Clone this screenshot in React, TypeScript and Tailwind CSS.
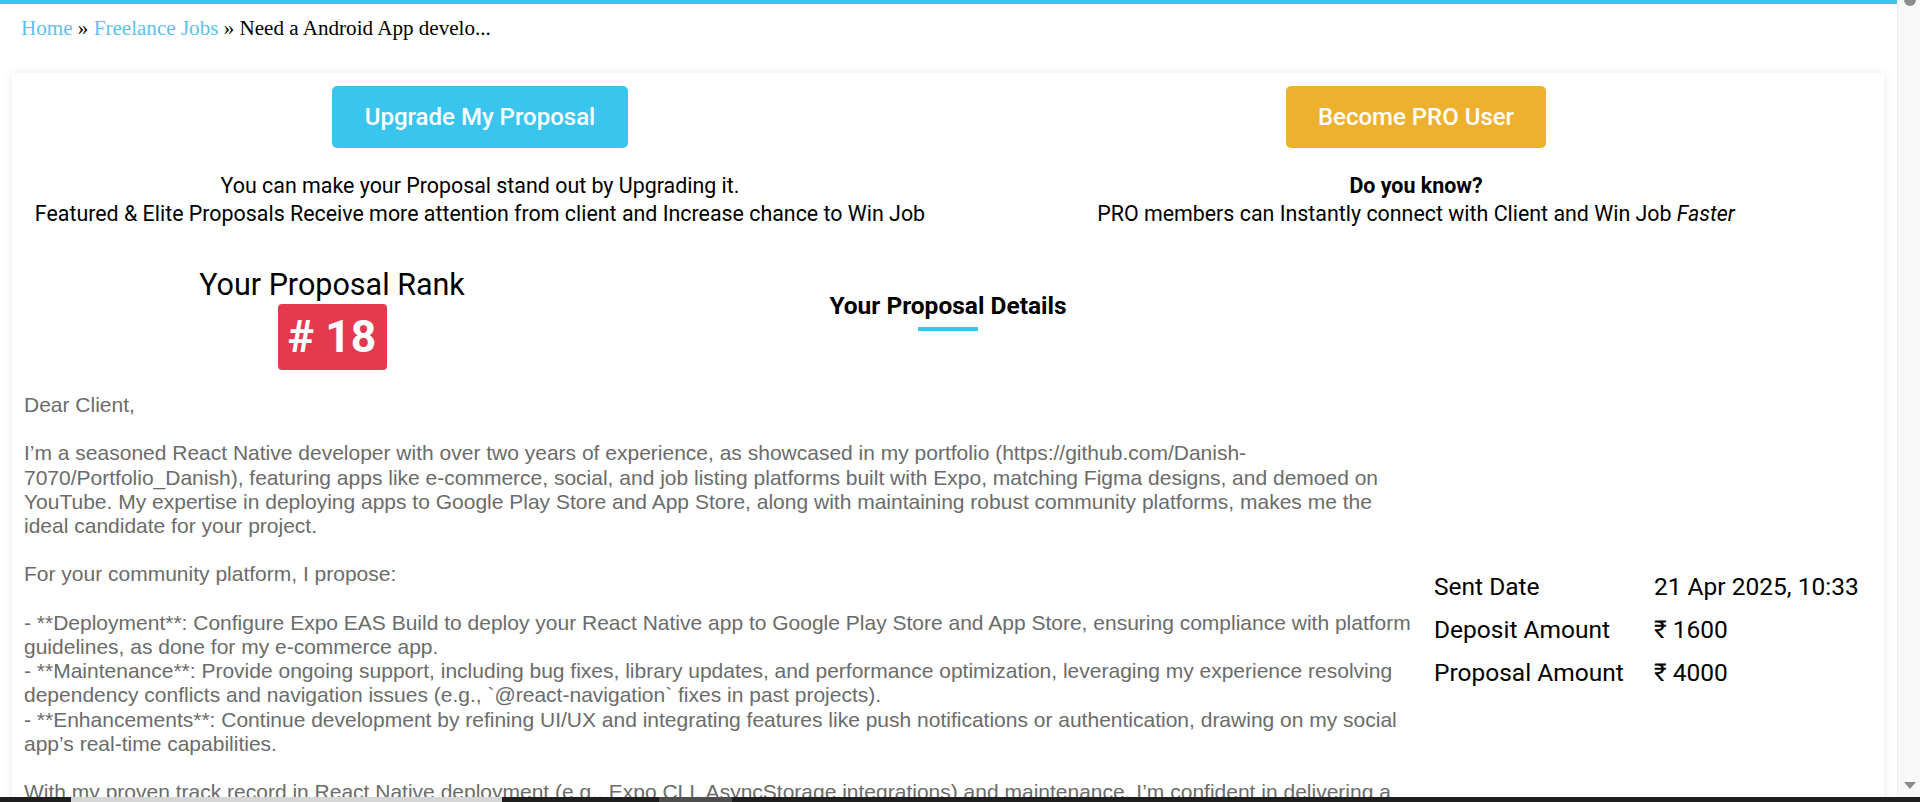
import React from 'react'

const body = `Dear Client,

I’m a seasoned React Native developer with over two years of experience, as showcased in my portfolio (https://github.com/Danish-7070/Portfolio_Danish), featuring apps like e-commerce, social, and job listing platforms built with Expo, matching Figma designs, and demoed on YouTube. My expertise in deploying apps to Google Play Store and App Store, along with maintaining robust community platforms, makes me the
ideal candidate for your project.

For your community platform, I propose:

- **Deployment**: Configure Expo EAS Build to deploy your React Native app to Google Play Store and App Store, ensuring compliance with platform guidelines, as done for my e-commerce app.
- **Maintenance**: Provide ongoing support, including bug fixes, library updates, and performance optimization, leveraging my experience resolving dependency conflicts and navigation issues (e.g., \`@react-navigation\` fixes in past projects).
- **Enhancements**: Continue development by refining UI/UX and integrating features like push notifications or authentication, drawing on my social app’s real-time capabilities.

With my proven track record in React Native deployment (e.g., Expo CLI, AsyncStorage integrations) and maintenance, I’m confident in delivering a seamless experience for your community. Let’s discuss your requirements!

Best regards,
Danish`

const details = [
  { label: 'Sent Date', value: '21 Apr 2025, 10:33' },
  { label: 'Deposit Amount', value: '₹ 1600' },
  { label: 'Proposal Amount', value: '₹ 4000' },
]

export default function App() {
  return (
    <div className="relative flex h-[802px] w-[1920px] overflow-hidden bg-white">
      <div className="flex w-[1897px] shrink-0 flex-col">
        {/* top accent */}
        <div className="h-[4px] shrink-0 bg-[#3ac5ef]" />

        {/* breadcrumb */}
        <nav className="h-[69px] shrink-0 pl-[21px] pt-[12px] font-['Liberation_Serif',serif] text-[21.1px] leading-[24px] text-black">
          <a className="text-[#5bc3ea]">Home</a> » <a className="text-[#5bc3ea]">Freelance Jobs</a> » Need a Android App develo...
        </nav>

        {/* card */}
        <div className="ml-[12px] w-[1872px] shrink-0 bg-white font-['Roboto',sans-serif] shadow-[0_0_10px_rgba(0,0,0,0.08)]">
          {/* upgrade / pro */}
          <div className="grid grid-cols-2 pt-[13px]">
            <div className="flex flex-col items-center">
              <button className="h-[62px] rounded-[5px] bg-[#3ac5ef] px-[33px] text-[24px] font-medium text-white">
                Upgrade My Proposal
              </button>
              <p className="mt-[24px] text-center text-[21.4px] leading-[28px] text-black">
                You can make your Proposal stand out by Upgrading it.
                <br />
                Featured &amp; Elite Proposals Receive more attention from client and Increase chance to Win Job
              </p>
            </div>
            <div className="flex flex-col items-center">
              <button className="h-[62px] rounded-[5px] bg-[#edb12f] px-[32px] text-[24px] font-medium text-white">
                Become PRO User
              </button>
              <p className="mt-[24px] text-center text-[21.4px] leading-[28px] text-black">
                <b className="font-bold">Do you know?</b>
                <br />
                PRO members can Instantly connect with Client and Win Job <i>Faster</i>
              </p>
            </div>
          </div>

          {/* rank + heading */}
          <div className="mt-[40px] grid grid-cols-[640px_592px_640px]">
            <div className="flex flex-col items-center">
              <div className="text-[30.5px] leading-[34px] text-black">Your Proposal Rank</div>
              <div className="mt-[2px] flex h-[66px] w-[109px] items-center justify-center rounded-[4px] bg-[#e4394f] text-[44.5px] font-bold text-white">
                # 18
              </div>
            </div>
            <div className="mt-[24px] flex flex-col items-center">
              <h2 className="text-[24.5px] font-bold leading-[28px] text-black">Your Proposal Details</h2>
              <div className="mt-[7px] h-[4px] w-[60px] bg-[#3ac5ef]" />
            </div>
            <div />
          </div>

          {/* proposal body + summary */}
          <div className="mt-[23px] grid grid-cols-[1392px_1fr] gap-[18px] px-[12px] pb-[40px]">
            <p className="whitespace-pre-line font-['Liberation_Sans',Arial,sans-serif] text-[21px] leading-[24.2px] text-[#6b6b6b]">
              {body}
            </p>
            <div className="mt-[172px] grid h-fit grid-cols-[220px_1fr] text-[24.5px] leading-[27px] text-black">
              {details.map(d => (
                <React.Fragment key={d.label}>
                  <div className="py-[8px]">{d.label}</div>
                  <div className="py-[8px]">{d.value}</div>
                </React.Fragment>
              ))}
            </div>
          </div>
        </div>
      </div>

      {/* vertical scrollbar */}
      <div className="relative w-[23px] shrink-0 border-l border-[#eeeeee] bg-[#f8f8f8]">
        <div className="absolute left-[6px] top-[-6px] h-[12px] w-[12px] rounded-full bg-[#8c8c8c]" />
        <div className="absolute left-[6px] top-[782px] h-0 w-0 border-l-[6px] border-r-[6px] border-t-[7px] border-l-transparent border-r-transparent border-t-[#8a8a8a]" />
      </div>

      {/* bottom strip */}
      <div className="absolute bottom-0 left-0 flex h-[5px] w-full bg-[#1e1e1e]">
        <div className="ml-[71px] w-[431px] bg-[#d6d6d6]" />
        <div className="ml-[157px] w-[73px] bg-[#4e4e4e]" />
      </div>
    </div>
  )
}
